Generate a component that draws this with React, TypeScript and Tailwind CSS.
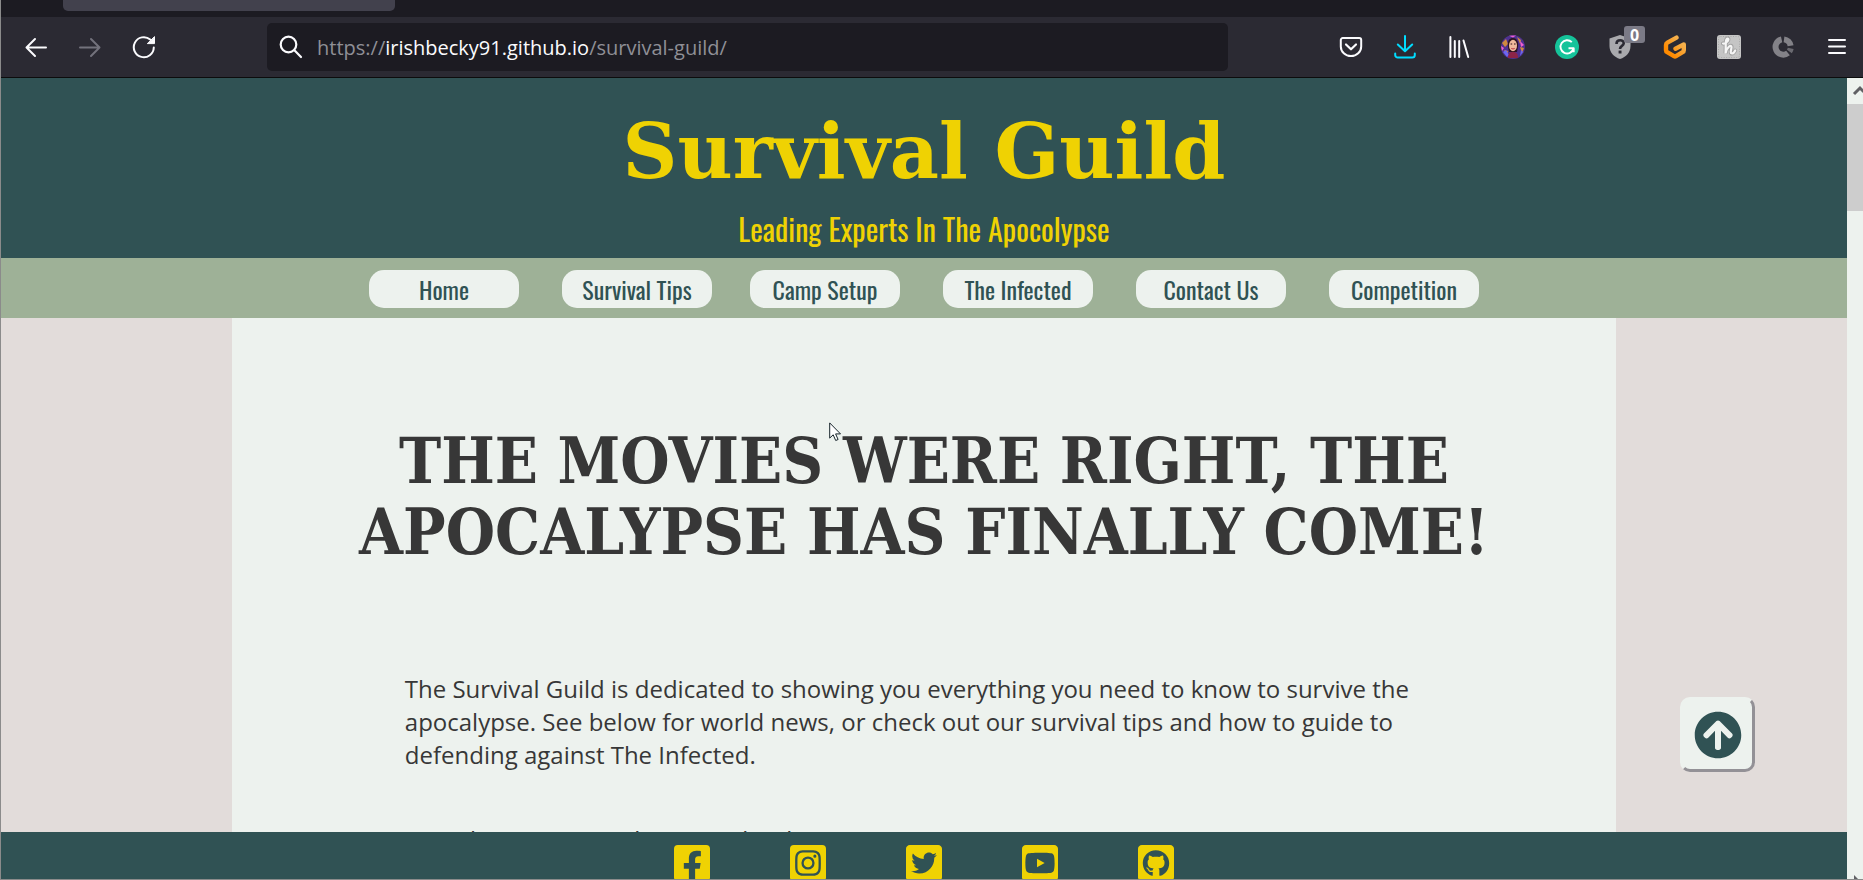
import type { ReactNode } from "react";
import {
  FaArrowCircleUp,
  FaFacebookSquare,
  FaGithubSquare,
  FaInstagramSquare,
  FaTwitterSquare,
  FaYoutubeSquare,
} from "react-icons/fa";

function ToolButton({ label, children }: { label: string; children: ReactNode }) {
  return (
    <button type="button" aria-label={label} className="relative flex size-6 shrink-0 items-center justify-center">
      {children}
    </button>
  );
}

const line = {
  width: 24,
  height: 24,
  viewBox: "0 0 24 24",
  fill: "none",
  stroke: "currentColor",
  strokeWidth: 2,
  strokeLinecap: "round" as const,
  strokeLinejoin: "round" as const,
};

function BrowserBar() {
  return (
    <div className="shrink-0 border-b border-[#0c0c0d] bg-[#2b2a33] text-[#fbfbfe]">
      <div className="h-[17px] bg-[#1c1b22] pl-[62px]">
        <div className="h-[11px] w-[332px] rounded-b-[5px] bg-[#42414d]" />
      </div>
      <div className="flex h-[60px] items-center pr-[14px] pl-[23px]">
        <div className="flex gap-[30px]">
          <ToolButton label="Back">
            <svg {...line}><path d="M22 12.5H2.5M11 4L2.5 12.5L11 21" /></svg>
          </ToolButton>
          <ToolButton label="Forward">
            <svg {...line} className="text-[#73727c]"><path d="M2 12.5H21.5M13 4L21.5 12.5L13 21" /></svg>
          </ToolButton>
          <ToolButton label="Reload">
            <svg {...line}>
              <path d="M21.8 12.5a10 10 0 1 1-3.6-8" />
              <path d="M22.5 2v6.6h-6.8z" fill="currentColor" strokeWidth="1" />
            </svg>
          </ToolButton>
        </div>
        <label className="relative mx-[111px] flex h-12 flex-1 items-center gap-[14px] rounded-[5px] bg-[#1c1b22] pl-3">
          <svg {...line} className="shrink-0" strokeWidth="2.2"><circle cx="9.5" cy="9.5" r="7.8" /><path d="M15.4 15.3L22 22" /></svg>
          <span className="pt-0.5 text-[20px] leading-8 text-[#8f8f96]">
            https://<span className="text-[#fbfbfe]">irishbecky91.github.io</span>/survival-guild/
          </span>
          <input aria-label="Address" className="absolute inset-0 rounded-[5px] bg-transparent" />
        </label>
        <div className="flex gap-[30px]">
          <ToolButton label="Save to Pocket">
            <svg {...line}><path d="M3.8 3h16.4a2 2 0 0 1 2 2v6.5a10.2 9.6 0 0 1-20.4 0V5a2 2 0 0 1 2-2z" /><path d="M7 9.5l5 4.8 5-4.8" strokeWidth="2.2" /></svg>
          </ToolButton>
          <ToolButton label="Downloads">
            <svg {...line} className="text-[#00ddff]"><path d="M12 1v15M4.8 9.5L12 16.2l7.2-6.7M2.2 18.5v1.5a2.6 2.6 0 0 0 2.6 2.6h14.4a2.6 2.6 0 0 0 2.6-2.6v-1.5" /></svg>
          </ToolButton>
          <ToolButton label="Library">
            <svg {...line}><path d="M3.4 2v20M7.8 6v16M12.2 6v16M16.5 5.5L21.2 22" /></svg>
          </ToolButton>
          <ToolButton label="Profile">
            <svg width="24" height="24" viewBox="0 0 24 24">
              <circle cx="12" cy="12" r="12" fill="#4f3190" />
              <path d="M1 8l4-4 2 5-3 3zM16 2l4 3-1 4zM3 15l4 1-1 4zM19 12l4 1-2 5z" fill="#d08a3f" />
              <path d="M8 .7l7-.3-3 2zM19 6l4 4-3 2zM0 11l3 2-2 3zM8 21l3 2-4 0z" fill="#f05fd0" />
              <path d="M2 17l3-2 3 5-2 2zM20 15l2 2-3 4z" fill="#6b66f2" />
              <path d="M7 12C6 5 9 3 12 3s6 3 5 9l-1 5H8z" fill="#2c1420" />
              <ellipse cx="12" cy="10.5" rx="4" ry="5.8" fill="#efb99b" />
              <path d="M7 23c0-5 2-6 5-6s5 1 5 6z" fill="#8c2447" />
              <path d="M10.3 13.4q1.7 1.2 3.4 0" stroke="#b8343f" fill="none" />
              <path d="M9.6 9h1.6M13 9h1.6" stroke="#33151c" />
            </svg>
          </ToolButton>
          <ToolButton label="Grammarly">
            <svg {...line} className="text-white">
              <circle cx="12" cy="12" r="12" fill="#15c39a" stroke="none" />
              <path d="M16.8 7.2a6.600 6.600 0 1 0 1.7 6.300M13.5 13.3h5.200v4" strokeWidth="1.9" strokeLinecap="butt" />
            </svg>
          </ToolButton>
          <ToolButton label="Site safety">
            <svg width="24" height="24" viewBox="0 0 24 24">
              <path d="M11 0L21.5 3.5V11c0 6.5-4.5 11-10.5 13C5 22 .5 17.5 .5 11V3.500z" fill="#a9a9ad" />
              <path d="M7.5 9c0-5 7.5-4.600 7.200-.6C14.5 11 11 10.8 11 14" fill="none" stroke="#2b2a33" strokeWidth="2.6" />
              <rect x="9.6" y="15.6" width="2.9" height="2.9" fill="#2b2a33" />
            </svg>
            <span className="absolute -top-[9px] left-[15px] flex h-[17px] w-[21px] items-center justify-center rounded-[3px] bg-[#7b7a86] text-[16px] leading-4 font-bold text-white">
              0
            </span>
          </ToolButton>
          <ToolButton label="Gitpod">
            <svg width="24" height="24" viewBox="0 0 24 24" fill="none">
              <defs>
                <linearGradient id="pod" x1="1" y1="0" x2="0" y2="1">
                  <stop offset="0.2" stopColor="#f5b04c" />
                  <stop offset="0.8" stopColor="#ff8a00" />
                </linearGradient>
              </defs>
              <path d="M13.5 2.600L4.400 7.600Q3 8.400 3 10v5.200q0 1.300 1.200 2L11 21.200q1 .6 2 0l6.600-4q1.200-.7 1.200-2V9.400L12.5 13.800" stroke="url(#pod)" strokeWidth="4.4" strokeLinecap="round" strokeLinejoin="round" />
            </svg>
          </ToolButton>
          <ToolButton label="Honey">
            <svg width="24" height="24" viewBox="0 0 24 24" fill="none">
              <rect width="24" height="24" rx="3" fill="#c5c5c5" />
              <rect x="1.5" y="1.5" width="21" height="21" rx="2" stroke="#a9a9a9" strokeDasharray="1 1.5" />
              <path d="M6 8.500c4 .5 7-5 4.500-5S9 12 8.500 18.500C9 13 15 8 14.500 12.500c-.3 2.500-1.800 6 .5 6 1.500 0 2.500-1.500 3.200-3" stroke="#a0a0a0" strokeWidth="4" strokeLinecap="round" />
              <path d="M6 8.500c4 .5 7-5 4.500-5S9 12 8.500 18.500C9 13 15 8 14.500 12.500c-.3 2.500-1.800 6 .5 6 1.500 0 2.500-1.500 3.200-3" stroke="#f6f6f6" strokeWidth="2.2" strokeLinecap="round" />
            </svg>
          </ToolButton>
          <ToolButton label="Usage">
            <svg width="24" height="24" viewBox="0 0 24 24" fill="none" stroke="#838288" strokeWidth="6">
              <path d="M10.6 4.400A7.700 7.700 0 1 0 17 18" />
              <path d="M13 4.400A7.700 7.700 0 0 1 19.600 10.800" />
              <path d="M19.7 13.400A7.700 7.700 0 0 1 18.400 16.400" stroke="#6b6a71" />
            </svg>
          </ToolButton>
          <ToolButton label="Menu">
            <svg {...line}><path d="M4 5h16M4 11.5h16M4 18h16" /></svg>
          </ToolButton>
        </div>
      </div>
    </div>
  );
}

const navGroups = [
  ["Home", "Survival Tips"],
  ["Camp Setup", "The Infected", "Contact Us", "Competition"],
];

const socials = [
  { name: "Facebook", Icon: FaFacebookSquare },
  { name: "Instagram", Icon: FaInstagramSquare },
  { name: "Twitter", Icon: FaTwitterSquare },
  { name: "YouTube", Icon: FaYoutubeSquare },
  { name: "GitHub", Icon: FaGithubSquare },
];

const wideSlab = { fontFamily: '"DejaVu Serif", serif' };
const slab = { fontFamily: '"DejaVu Serif Condensed", "DejaVu Serif", serif' };
const oswald = { fontFamily: "Oswald, sans-serif" };

export default function App() {
  return (
    <div
      className="flex h-screen flex-col overflow-hidden border-b border-l border-[#8b8b8b]"
      style={{ fontFamily: '"Open Sans", sans-serif' }}
    >
      <BrowserBar />
      <div className="flex min-h-0 flex-1">
        <div className="relative flex min-w-0 flex-1 flex-col">
          <header className="shrink-0 bg-[#305254] pt-[38px] pb-[7px] text-center text-[#efd203]">
            <h1 className="text-[76px] leading-[72px] font-bold" style={wideSlab}>Survival Guild</h1>
            <p className="mt-[19px] text-[30px] leading-[44px]" style={oswald}>Leading Experts In The Apocolypse</p>
          </header>
          <nav className="flex shrink-0 justify-center gap-[38px] bg-[#9eb197] pt-3 pb-[10px]" style={oswald}>
            {navGroups.map((group) => (
              <ul key={group[0]} className="flex gap-[43px]">
                {group.map((item) => (
                  <li key={item}>
                    <a href="#" className="block w-[150px] rounded-[15px] bg-[#edf2ee] text-center text-2xl leading-[38px] text-[#305254]">
                      {item}
                    </a>
                  </li>
                ))}
              </ul>
            ))}
          </nav>
          <div className="min-h-0 flex-1 overflow-hidden bg-[#e2dcda] px-[12.5%]">
            <main className="bg-[#edf2ee] pt-[108px] pb-24 text-[#373737]">
              <h2 className="px-12 text-center text-[63px] leading-[71px] font-bold uppercase" style={slab}>
                The movies were right, the apocalypse has finally come!
              </h2>
              <div className="mt-[104px] space-y-[52px] px-[12.5%] text-2xl leading-[33px]">
                <p>
                  The Survival Guild is dedicated to showing you everything you need to know to survive the apocalypse.
                  See below for world news, or check out our survival tips and how to guide to defending against The
                  Infected.
                </p>
                <p>From here you can also visit a bunker.</p>
              </div>
            </main>
          </div>
          <footer className="flex h-[47px] shrink-0 justify-center gap-20 overflow-hidden bg-[#305254] pt-[10px] text-[#efd203]">
            {socials.map(({ name, Icon }) => (
              <a key={name} href="#" aria-label={name}>
                <Icon className="h-[42px] w-9" />
              </a>
            ))}
          </footer>
          <a
            href="#"
            aria-label="Back to top"
            className="absolute right-[92px] bottom-[107px] flex size-[75px] items-center justify-center rounded-[10px] border-[3px] border-t-[#edf2ee] border-r-[#939196] border-b-[#939196] border-l-[#edf2ee] bg-[#edf2ee] text-[#305254]"
          >
            <FaArrowCircleUp className="size-12" />
          </a>
          <svg className="absolute top-[344px] left-[828px]" width="13" height="20" viewBox="0 0 13 20" aria-hidden="true">
            <path d="M.7.900v15.200l3.500-3.300 2.500 5.700 2.400-1-2.500-5.600h4.900z" fill="#fff" stroke="#17242b" strokeWidth="1" />
          </svg>
        </div>
        <div className="flex w-4 shrink-0 flex-col overflow-hidden bg-[#edf2ee]">
          <svg className="h-[26px] w-4 shrink-0" viewBox="0 0 16 26" aria-hidden="true">
            <path d="M7 16l6-6 6 6" fill="none" stroke="#606064" strokeWidth="3" />
          </svg>
          <div className="h-[107px] bg-[#cdcdcd]" />
          <svg className="mt-auto h-1 w-4 shrink-0" viewBox="0 0 16 4" aria-hidden="true">
            <path d="M7 0l4 4h-4z" fill="#606064" />
          </svg>
        </div>
      </div>
    </div>
  );
}
